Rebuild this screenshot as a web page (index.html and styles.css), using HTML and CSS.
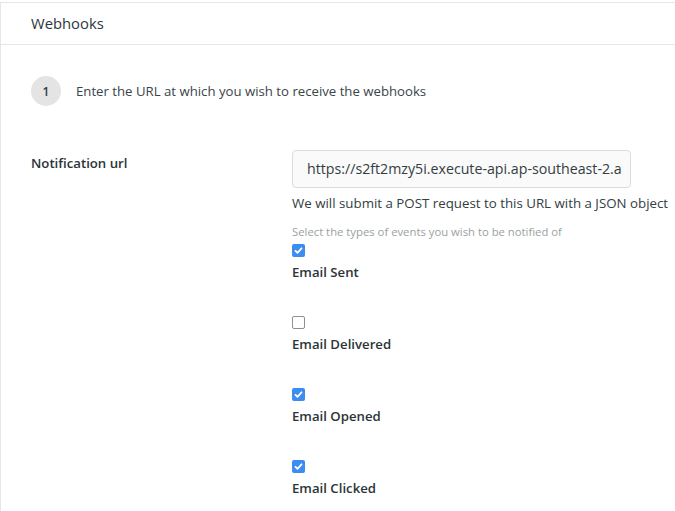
FILE: index.html
```html
<!DOCTYPE html>
<html lang="en">
<head>
<meta charset="utf-8">
<title>Webhooks</title>
<link rel="stylesheet" href="styles.css">
</head>
<body>
<div class="card">
  <div class="card-header">Webhooks</div>
  <div class="card-body">
    <div class="step">
      <span class="step-num">1</span>
      <span class="step-text">Enter the URL at which you wish to receive the webhooks</span>
    </div>
    <div class="form-row">
      <label class="form-label">Notification url</label>
      <div class="form-field">
        <div class="input">https://s2ft2mzy5i.execute-api.ap-southeast-2.a</div>
        <p class="help">We will submit a POST request to this URL with a JSON object</p>
        <p class="hint">Select the types of events you wish to be notified of</p>
        <div class="events">
          <div class="event">
            <span class="cb checked"><svg viewBox="0 0 13 13" width="13" height="13"><path d="M3.5 6.8 L5.5 8.8 L9.5 4.3" fill="none" stroke="#fff" stroke-width="1.8" stroke-linecap="round" stroke-linejoin="round"/></svg></span>
            <span class="event-label">Email Sent</span>
          </div>
          <div class="event">
            <span class="cb"></span>
            <span class="event-label">Email Delivered</span>
          </div>
          <div class="event">
            <span class="cb checked"><svg viewBox="0 0 13 13" width="13" height="13"><path d="M3.5 6.8 L5.5 8.8 L9.5 4.3" fill="none" stroke="#fff" stroke-width="1.8" stroke-linecap="round" stroke-linejoin="round"/></svg></span>
            <span class="event-label">Email Opened</span>
          </div>
          <div class="event">
            <span class="cb checked"><svg viewBox="0 0 13 13" width="13" height="13"><path d="M3.5 6.8 L5.5 8.8 L9.5 4.3" fill="none" stroke="#fff" stroke-width="1.8" stroke-linecap="round" stroke-linejoin="round"/></svg></span>
            <span class="event-label">Email Clicked</span>
          </div>
        </div>
      </div>
    </div>
  </div>
</div>
</body>
</html>
```
FILE: styles.css
```css
html, body {
  margin: 0;
  padding: 0;
  overflow: hidden;
  background: #fff;
}
body {
  font-family: "Open Sans", "Liberation Sans", sans-serif;
  color: #2f3a40;
  font-size: 13px;
}
.card {
  margin-top: 2px;
  width: 720px;
  border: 1px solid #e6e6e6;
  border-right: none;
  background: #fff;
  min-height: 520px;
}
.card-header {
  height: 41px;
  line-height: 41px;
  padding-left: 30px;
  font-size: 14.8px;
  border-bottom: 1px solid #e6e6e6;
  color: #2d363c;
}
.card-body {
  padding: 31px 0 0 30px;
}
.step {
  display: flex;
  align-items: center;
  gap: 15px;
}
.step-num {
  width: 30px;
  height: 30px;
  border-radius: 50%;
  background: #e4e4e4;
  display: flex;
  align-items: center;
  justify-content: center;
  font-size: 12px;
  font-weight: 600;
}
.step-text {
  font-size: 13.2px;
  color: #3a4449;
}
.form-row {
  display: flex;
  margin-top: 44px;
}
.form-label {
  width: 261px;
  font-weight: 600;
  font-size: 13.2px;
  padding-top: 4px;
  color: #2a3439;
}
.form-field {
  width: 384px;
}
.input {
  width: 339px;
  box-sizing: border-box;
  height: 38px;
  border: 1px solid #dcdcdc;
  border-radius: 4px;
  background: #fafafa;
  padding: 0 14px;
  line-height: 36px;
  font-size: 14.2px;
  white-space: nowrap;
  overflow: hidden;
  color: #333d42;
}
.help {
  margin: 6px 0 0;
  font-size: 13.3px;
  white-space: nowrap;
  color: #333d42;
}
.hint {
  margin: 12px 0 0;
  font-size: 11.3px;
  color: #9a9fa2;
  white-space: nowrap;
}
.events {
  display: flex;
  flex-direction: column;
  gap: 35px;
  margin-top: 5px;
}
.event {
  display: flex;
  flex-direction: column;
  align-items: flex-start;
  gap: 7px;
}
.cb {
  width: 13px;
  height: 13px;
  box-sizing: border-box;
  border: 1px solid #8f8f8f;
  border-radius: 2px;
  background: #fff;
  display: flex;
}
.cb.checked {
  border: none;
  background: #3b8df3;
}
.event-label {
  font-weight: 600;
  font-size: 13.2px;
  line-height: 17px;
  color: #2a3439;
}
```
